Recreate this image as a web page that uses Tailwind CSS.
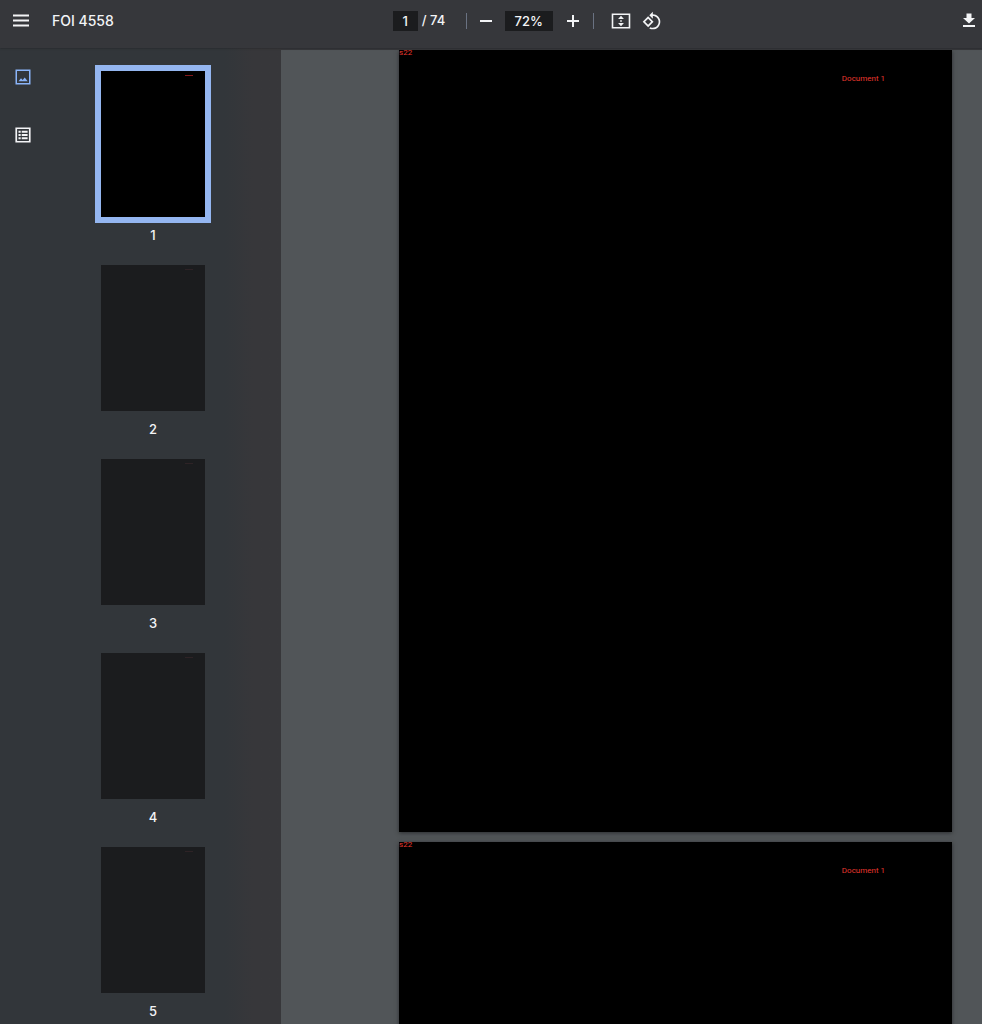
<!DOCTYPE html>
<html lang="en">
<head>
  <meta charset="UTF-8" />
  <meta name="viewport" content="width=device-width, initial-scale=1.0" />
  <title>FOI 4558</title>
  <script src="https://cdn.jsdelivr.net/npm/@tailwindcss/browser@4"></script>
</head>
<body class="h-screen flex flex-col overflow-hidden bg-[#515558] font-['Inter',sans-serif] text-[13px] font-medium text-gray-100">

  <!-- Toolbar -->
  <header class="relative z-10 flex h-12 shrink-0 items-center bg-[#36373b] pb-1.5 shadow-[0_0_2px_#1f2023]">
    <div class="flex w-[40%] items-center gap-5 pl-[10px]">
      <button aria-label="Menu" class="flex size-[22px] items-center justify-center">
        <svg class="size-[22px]" viewBox="0 0 22 22" fill="currentColor"><path d="M3 4.500h16v2H3zM3 9.500h16v2H3zM3 14.500h16v2H3z"/></svg>
      </button>
      <h1 class="text-sm">FOI 4558</h1>
    </div>

    <div class="flex items-center">
      <input type="text" value="1" aria-label="Page number" class="h-5 w-[25px] bg-[#1b1c1e] text-center" />
      <span class="w-11 pl-1">/ 74</span>
      <span class="ml-1 h-4 w-px bg-gray-500"></span>
      <button aria-label="Zoom out" class="ml-[11px] flex size-4 items-center justify-center">
        <svg class="size-4" viewBox="0 0 16 16" fill="currentColor"><path d="M2 7h12v2H2z"/></svg>
      </button>
      <input type="text" value="72%" aria-label="Zoom level" class="ml-[11px] h-5 w-12 bg-[#1b1c1e] text-center" />
      <button aria-label="Zoom in" class="ml-3 flex size-4 items-center justify-center">
        <svg class="size-4" viewBox="0 0 16 16" fill="currentColor"><path d="M2 7h5V2h2v5h5v2H9v5H7V9H2z"/></svg>
      </button>
      <span class="ml-3 h-4 w-px bg-gray-500"></span>
      <button aria-label="Fit to page" class="ml-[17px]">
        <svg class="size-5" viewBox="0 0 20 20"><path d="M1.500 3.200h17v13.600h-17z" fill="none" stroke="currentColor" stroke-width="1.600"/><path d="M10 4.800l2.900 3.200H7.100zM10 15.200l2.900-3.200H7.100zM9.200 9.200h1.600v1.600H9.200z" fill="currentColor"/></svg>
      </button>
      <button aria-label="Rotate counterclockwise" class="ml-[11px]">
        <svg class="size-5" viewBox="0 0 24 24" fill="currentColor"><path d="M7.34 6.41L.86 12.9l6.49 6.48 6.49-6.48-6.5-6.49zM3.69 12.9l3.66-3.66L11 12.9l-3.66 3.66-3.65-3.66zm15.67-6.26C17.61 4.88 15.3 4 13 4V.76L8.76 5 13 9.24V6c1.79 0 3.58.68 4.95 2.05 2.73 2.73 2.73 7.17 0 9.9C16.58 19.32 14.79 20 13 20c-.97 0-1.94-.21-2.84-.61l-1.49 1.49C10.02 21.62 11.51 22 13 22c2.3 0 4.61-.88 6.36-2.64 3.52-3.51 3.52-9.21 0-12.72z"/></svg>
      </button>
    </div>

    <button aria-label="Download" class="ml-auto pr-1">
      <svg class="size-[18px]" viewBox="0 0 18 18" fill="currentColor"><path d="M6.500 1.500h5V6H15l-6 5.500L3 6h3.500zM3 13h12v2H3z"/></svg>
    </button>
  </header>

  <div class="flex min-h-0 flex-1">
    <!-- Sidebar -->
    <aside class="flex w-[281px] shrink-0 bg-linear-to-r from-[#32363a] from-80% to-[#37373a] to-90%">
      <div class="flex w-[46px] flex-col items-center gap-10 pt-5">
        <button aria-label="Thumbnails" class="text-[#8ab4f8]">
          <svg class="size-[18px]" viewBox="0 0 18 18"><path d="M2.250 2.250h13.500v13.500H2.250z" fill="none" stroke="currentColor" stroke-width="1.500"/><path d="M4.500 13.300l2.500-3 1.700 1.800 2-2.600 3 3.800z" fill="currentColor"/></svg>
        </button>
        <button aria-label="Document outline">
          <svg class="size-[18px]" viewBox="0 0 18 18"><path d="M2.250 2.250h13.500v13.500H2.250z" fill="none" stroke="currentColor" stroke-width="1.700"/><path d="M4.500 4.800h2.200v2H4.500zM7.700 4.800h5.900v2H7.700zM4.500 8h2.200v2H4.500zM7.700 8h5.900v2H7.700zM4.500 11.200h2.200v2H4.500zM7.700 11.200h5.900v2H7.700z" fill="currentColor"/></svg>
        </button>
      </div>

      <nav aria-label="Page thumbnails" class="flex flex-col pl-[55px] pt-[23px]">
        <a href="#page1" class="flex h-[194px] shrink-0 flex-col gap-[10px] text-center">
          <span class="flex h-[146px] w-[104px] justify-end bg-black pr-3 pt-1 outline-6 outline-[#94b6f0]"><span class="h-px w-2 bg-red-900"></span></span>
          <span class="leading-4">1</span>
        </a>
        <a href="#page2" class="flex h-[194px] shrink-0 flex-col gap-[10px] text-center">
          <span class="flex h-[146px] w-[104px] justify-end bg-[#1b1c1e] pr-3 pt-1"><span class="h-px w-2 bg-[#2e2326]"></span></span>
          <span class="leading-4">2</span>
        </a>
        <a href="#page3" class="flex h-[194px] shrink-0 flex-col gap-[10px] text-center">
          <span class="flex h-[146px] w-[104px] justify-end bg-[#1b1c1e] pr-3 pt-1"><span class="h-px w-2 bg-[#2e2326]"></span></span>
          <span class="leading-4">3</span>
        </a>
        <a href="#page4" class="flex h-[194px] shrink-0 flex-col gap-[10px] text-center">
          <span class="flex h-[146px] w-[104px] justify-end bg-[#1b1c1e] pr-3 pt-1"><span class="h-px w-2 bg-[#2e2326]"></span></span>
          <span class="leading-4">4</span>
        </a>
        <a href="#page5" class="flex h-[194px] shrink-0 flex-col gap-[10px] text-center">
          <span class="flex h-[146px] w-[104px] justify-end bg-[#1b1c1e] pr-3 pt-1"><span class="h-px w-2 bg-[#2e2326]"></span></span>
          <span class="leading-4">5</span>
        </a>
      </nav>
    </aside>

    <!-- Document -->
    <main class="flex flex-1 flex-col gap-[10px] overflow-hidden border-t-2 border-[#36373b] pl-[118px] pr-[30px] font-['Roboto',sans-serif] text-[8px] font-normal text-[#e8382f]">
      <section id="page1" class="aspect-[553/782] shrink-0 bg-black shadow-[0_1px_4px_#2b2d2f]">
        <p class="leading-[6px]">s22</p>
        <p class="pr-[67px] pt-[18px] text-right leading-[10px]">Document 1</p>
      </section>
      <section id="page2" class="aspect-[553/782] shrink-0 bg-black shadow-[0_1px_4px_#2b2d2f]">
        <p class="leading-[6px]">s22</p>
        <p class="pr-[67px] pt-[18px] text-right leading-[10px]">Document 1</p>
      </section>
    </main>
  </div>

</body>
</html>
